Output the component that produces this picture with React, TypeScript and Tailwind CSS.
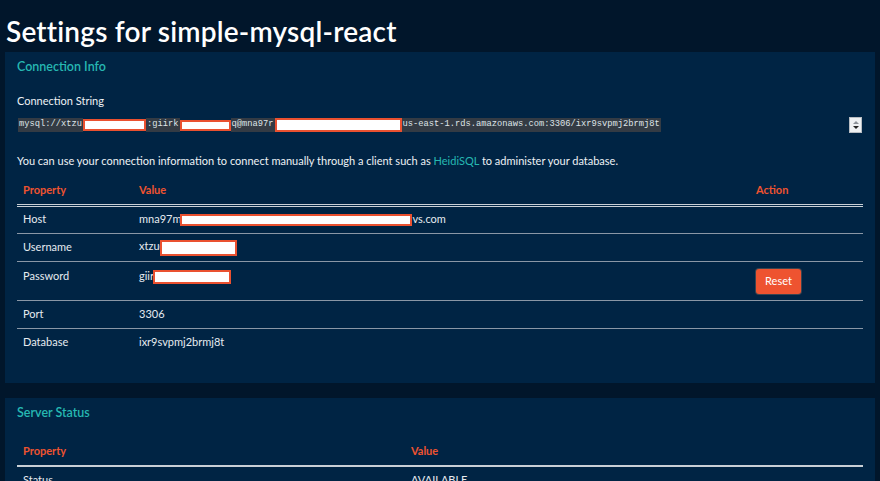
const font = { fontFamily: 'Lato, "Open Sans", sans-serif' };

function Redact({ w, h = 14, className = '' }: { w: number; h?: number; className?: string }) {
  return (
    <span
      className={`inline-block align-middle border-2 border-[#ea5130] bg-white ${className}`}
      style={{ width: w, height: h }}
    />
  );
}

function Row({ label, children, action, last }: { label: string; children: React.ReactNode; action?: React.ReactNode; last?: boolean }) {
  return (
    <tr className={last ? '' : 'border-b border-[#8a97a6]'}>
      <td className="px-[6px] h-[28px] align-middle text-[11px] text-[#e6ebf0]">{label}</td>
      <td className="px-[6px] align-middle text-[11px] text-[#e6ebf0] whitespace-nowrap">{children}</td>
      <td className="px-0 align-middle">{action}</td>
    </tr>
  );
}

export default function App() {
  return (
    <div className="w-[880px] h-[481px] overflow-hidden bg-[#01162b] pl-[5px] pr-[5px]" style={font}>
      <h1 className="text-[28px] leading-[34px] font-semibold text-white pt-[14px] pl-[1px] h-[52px] tracking-[0.2px]">
        Settings for simple-mysql-react
      </h1>

      <section className="bg-[#002444] h-[331px] px-[12px]">
        <h2 className="pt-[7px] text-[12.5px] leading-[16px] font-semibold text-[#26b8b2]">Connection Info</h2>
        <div className="mt-[18px] text-[11px] leading-[16px] text-[#eef2f5]">Connection String</div>
        <div className="mt-[7px] flex items-center justify-between h-[18px] pr-[1px]">
          <div className="flex items-center font-['Liberation_Mono',monospace] text-[8.75px] text-[#dfe4e8] pl-[1px]">
            <span className="bg-[#343b44] px-[1px]">mysql://xtzu</span>
            <Redact w={63} h={12} />
            <span className="bg-[#343b44] px-[1px]">:giirk</span>
            <Redact w={51} h={11} />
            <span className="bg-[#343b44] px-[1px]">q@mna97r</span>
            <Redact w={127} h={14} />
            <span className="bg-[#343b44] px-[1px]">us-east-1.rds.amazonaws.com:3306/ixr9svpmj2brmj8t</span>
          </div>
          <div className="w-[13px] h-[16px] bg-[#eef0f2] border border-[#b8bcc2] flex flex-col items-center justify-center gap-[2px]">
            <span className="block w-0 h-0 border-l-[3px] border-r-[3px] border-b-[3px] border-l-transparent border-r-transparent border-b-[#8a8f96]" />
            <span className="block w-0 h-0 border-l-[3px] border-r-[3px] border-t-[3px] border-l-transparent border-r-transparent border-t-[#222]" />
          </div>
        </div>
        <p className="mt-[19px] text-[11px] leading-[16px] text-[#eef2f5]">
          You can use your connection information to connect manually through a client such as{' '}
          <span className="text-[#26b8b2]">HeidiSQL</span> to administer your database.
        </p>

        <table className="mt-[8px] w-[846px] border-collapse">
          <thead>
            <tr className="border-b-[3px] border-double border-[#c9cfd6]">
              <th className="text-left px-[6px] h-[28px] w-[116px] text-[11px] font-bold text-[#ee5330]">Property</th>
              <th className="text-left px-[6px] text-[11px] font-bold text-[#ee5330]">Value</th>
              <th className="text-left px-0 w-[107px] text-[11px] font-bold text-[#ee5330]">Action</th>
            </tr>
          </thead>
          <tbody>
            <Row label="Host">
              mna97m<Redact w={232} h={12} className="-ml-[1px]" />vs.com
            </Row>
            <Row label="Username">
              xtzuc<Redact w={77} h={16} className="-ml-[5px]" />
            </Row>
            <tr className="border-b border-[#8a97a6]">
              <td className="px-[6px] pt-[6px] h-[39px] align-top text-[11px] text-[#e6ebf0]">Password</td>
              <td className="px-[6px] pt-[6px] align-top text-[11px] text-[#e6ebf0] whitespace-nowrap">
                giir<Redact w={78} h={14} className="-ml-[1px]" />
              </td>
              <td className="px-0 align-middle">
                <button className="w-[45px] h-[25px] rounded-[3px] bg-[#ee5330] text-white text-[11px] shadow-[0_0_0_1px_#3b4450]">
                  Reset
                </button>
              </td>
            </tr>
            <Row label="Port">3306</Row>
            <Row label="Database" last>ixr9svpmj2brmj8t</Row>
          </tbody>
        </table>
      </section>

      <section className="mt-[15px] bg-[#002444] h-[120px] px-[12px]">
        <h2 className="pt-[7px] text-[12.5px] leading-[16px] font-semibold text-[#26b8b2]">Server Status</h2>
        <table className="mt-[17px] w-[846px] border-collapse">
          <thead>
            <tr className="border-b-2 border-[#c9cfd6]">
              <th className="text-left px-[6px] h-[28px] w-[388px] text-[11px] font-bold text-[#ee5330]">Property</th>
              <th className="text-left px-[6px] text-[11px] font-bold text-[#ee5330]">Value</th>
            </tr>
          </thead>
          <tbody>
            <tr>
              <td className="px-[6px] h-[28px] text-[11px] text-[#e6ebf0]">Status</td>
              <td className="px-[6px] text-[11px] text-[#e6ebf0]">AVAILABLE</td>
            </tr>
          </tbody>
        </table>
      </section>
    </div>
  );
}
